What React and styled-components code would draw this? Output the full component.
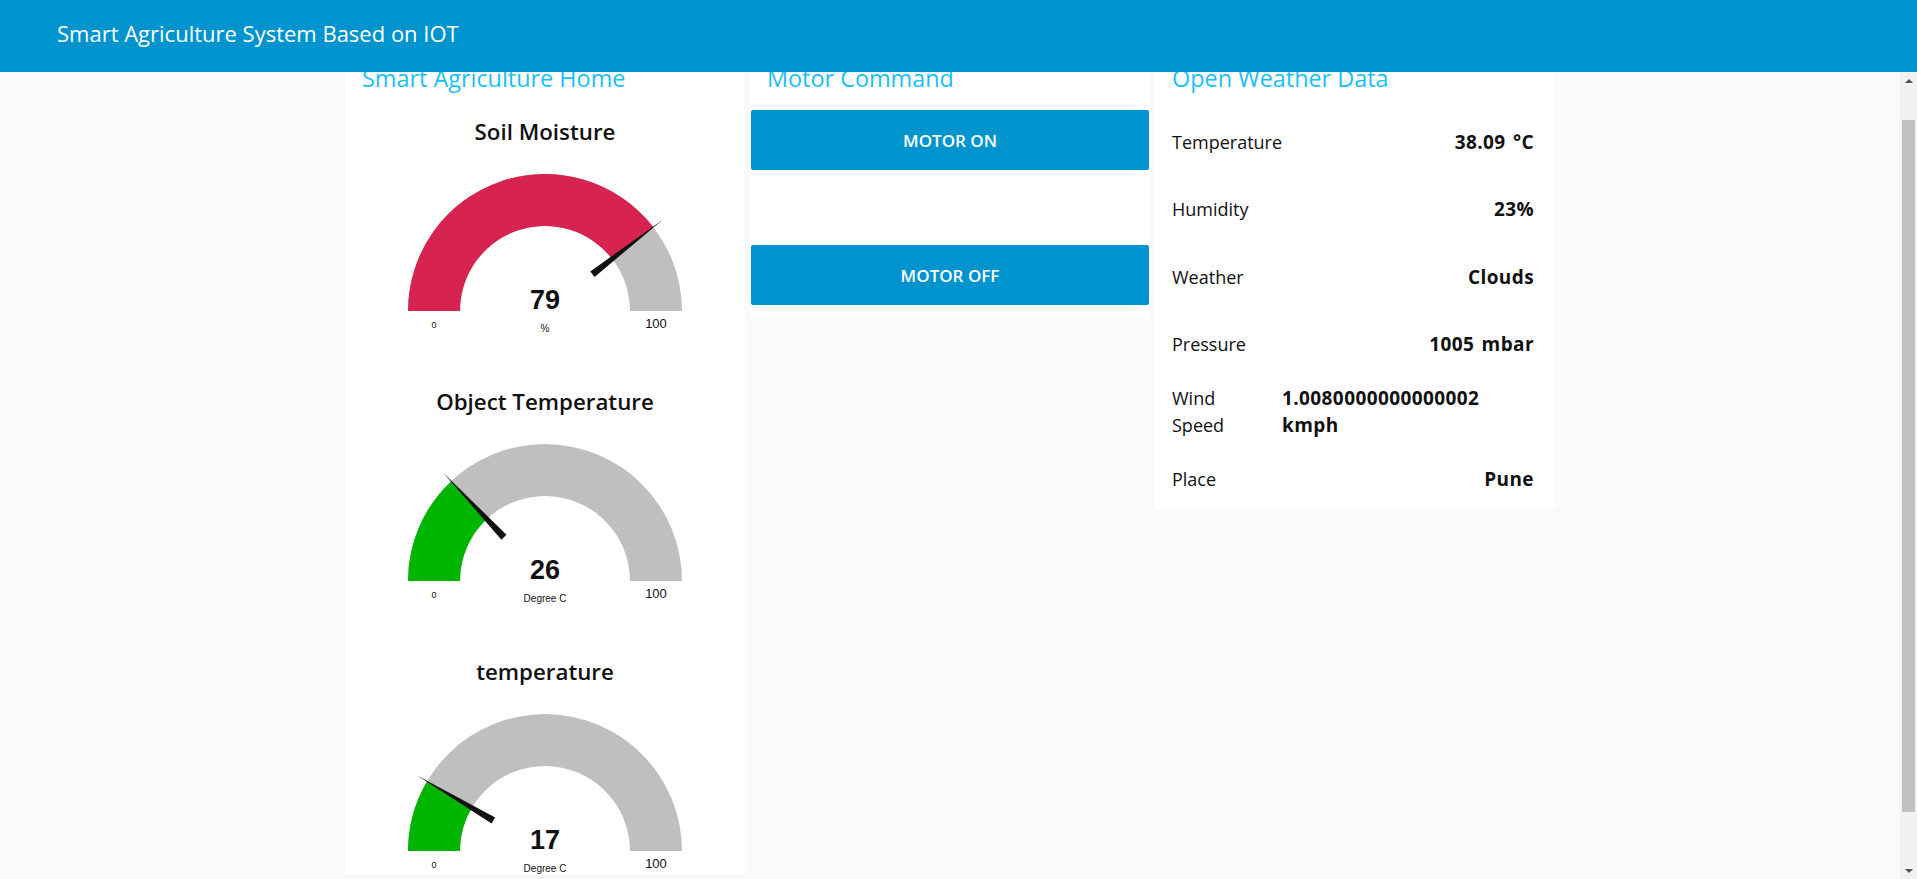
import React, { useLayoutEffect, useRef } from "react";
import styled, { createGlobalStyle, css } from "styled-components";

const GlobalStyle = createGlobalStyle`
  html, body { margin: 0; padding: 0; height: 100%; overflow: hidden; }
  body {
    font-family: "Open Sans", "Noto Sans", sans-serif;
    background: #fafafa;
    color: #111;
  }
  #root { height: 100%; }
  *, *::before, *::after { box-sizing: border-box; }
`;

const Shell = styled.div`
  height: 100vh;
  display: flex;
  flex-direction: column;
`;

const Toolbar = styled.header`
  flex: 0 0 72px;
  background: #0094ce;
  display: flex;
  align-items: center;
  padding: 0 0 6px 57px;
`;

const ToolbarTitle = styled.h1`
  margin: 0;
  font-size: 22px;
  line-height: 30px;
  font-weight: 400;
  color: #fff;
`;

const Body = styled.div`
  flex: 1;
  min-height: 0;
  display: flex;
`;

const Viewport = styled.main`
  flex: 1;
  min-width: 0;
  overflow: hidden;
  background: #fafafa;
`;

const Columns = styled.div`
  display: flex;
  justify-content: center;
  align-items: flex-start;
  gap: 5px;
  padding: 6px 0 64px;
`;

const Group = styled.section`
  width: 400px;
  background: #fff;
  display: flex;
  flex-direction: column;
  padding: 20px 0 ${(p) => p.$padBottom}px;
`;

const GroupTitle = styled.h2`
  margin: 0;
  padding: 0 17px;
  font-size: 23.4px;
  line-height: 32px;
  font-weight: 400;
  color: #1bbfff;
`;

/* ---------- Gauges ---------- */

const GaugeList = styled.div`
  display: flex;
  flex-direction: column;
  gap: 52px;
  margin-top: 22px;
`;

const GaugeWidget = styled.figure`
  margin: 0;
  display: flex;
  flex-direction: column;
  align-items: center;
`;

const GaugeTitle = styled.figcaption`
  font-size: 22.3px;
  line-height: 32px;
  font-weight: 600;
  color: #111;
`;

const GaugeSvg = styled.svg`
  display: block;
  width: 300px;
  height: 186px;
`;

const ValueText = styled.text`
  font-family: "Liberation Sans", Arial, sans-serif;
  font-weight: 700;
  font-size: 27px;
  fill: #111;
`;

const ScaleText = styled.text`
  font-family: "Liberation Sans", Arial, sans-serif;
  font-size: ${(p) => p.$size}px;
  fill: #111;
`;

const CX = 150;
const CY = 163;
const R_OUT = 137;
const R_IN = 85;

const pt = (rad, a) => [CX + rad * Math.cos(a), CY - rad * Math.sin(a)];

function sector(a1, a2) {
  const [x1, y1] = pt(R_OUT, a1);
  const [x2, y2] = pt(R_OUT, a2);
  const [x3, y3] = pt(R_IN, a2);
  const [x4, y4] = pt(R_IN, a1);
  return `M${x1} ${y1} A${R_OUT} ${R_OUT} 0 0 1 ${x2} ${y2} L${x3} ${y3} A${R_IN} ${R_IN} 0 0 0 ${x4} ${y4} Z`;
}

function Gauge({ title, value, unit, color }) {
  const a = Math.PI * (1 - value / 100);
  return (
    <GaugeWidget>
      <GaugeTitle>{title}</GaugeTitle>
      <GaugeSvg viewBox="0 0 300 186">
        <path d={sector(Math.PI, 0)} fill="#bfbfbf" />
        <path d={sector(Math.PI, a)} fill={color} />
        <polygon
          points={`${CX - 60},${CY - 3.5} ${CX - 60},${CY + 3.5} ${CX - 149},${CY}`}
          fill="#111"
          transform={`rotate(${value * 1.8} ${CX} ${CY})`}
        />
        <ValueText x={CX} y={CY - 2} textAnchor="middle">
          {value}
        </ValueText>
        <ScaleText $size={9} x={CX - 111} y={CY + 16.5} textAnchor="middle">
          0
        </ScaleText>
        <ScaleText $size={13} x={CX + 111} y={CY + 16.5} textAnchor="middle">
          100
        </ScaleText>
        <ScaleText $size={10} x={CX} y={CY + 21} textAnchor="middle">
          {unit}
        </ScaleText>
      </GaugeSvg>
    </GaugeWidget>
  );
}

/* ---------- Motor buttons ---------- */

const ButtonStack = styled.div`
  display: flex;
  flex-direction: column;
  gap: 75px;
  margin-top: 16px;
  padding: 0 1px;
`;

const CommandButton = styled.button`
  height: 60px;
  border: none;
  border-radius: 2px;
  background: #0094ce;
  color: #fff;
  font-family: "Open Sans", "Noto Sans", sans-serif;
  font-size: 17px;
  font-weight: 600;
  cursor: pointer;
`;

/* ---------- Weather rows ---------- */

const DataList = styled.div`
  display: flex;
  flex-direction: column;
  gap: 13.5px;
  margin-top: 21px;
  padding: 0 21px 0 17px;
`;

const DataRow = styled.div`
  min-height: 54px;
  display: flex;
  align-items: center;
  justify-content: space-between;
  font-size: 18px;
  line-height: 27px;
  color: #111;
`;

const DataLabel = styled.span`
  ${(p) =>
    p.$stacked &&
    css`
      flex: 0 0 80px;
      margin-right: 30px;
    `}
`;

const DataValue = styled.span`
  font-size: 19px;
  font-weight: 700;
  letter-spacing: 0.4px;
  word-spacing: 2px;
  text-align: right;
  ${(p) =>
    p.$stacked &&
    css`
      flex: 0 1 215px;
      text-align: left;
      margin-right: auto;
    `}
`;

/* ---------- Scrollbar ---------- */

const ScrollTrack = styled.div`
  flex: 0 0 17px;
  background: #f1f1f1;
  display: flex;
  flex-direction: column;
`;

const ScrollArrow = styled.div`
  flex: 0 0 17px;
  display: flex;
  align-items: center;
  justify-content: center;
`;

const ArrowGlyph = styled.span`
  width: 0;
  height: 0;
  border-left: 4px solid transparent;
  border-right: 4px solid transparent;
  ${(p) =>
    p.$down
      ? css`border-top: 4px solid #505050;`
      : css`border-bottom: 4px solid #505050;`}
`;

const ThumbLane = styled.div`
  flex: 1;
  display: flex;
  padding: 31px 2px 50px;
`;

const Thumb = styled.div`
  flex: 1;
  background: #c1c1c1;
`;

const gauges = [
  { title: "Soil Moisture", value: 79, unit: "%", color: "#d6234f" },
  { title: "Object Temperature", value: 26, unit: "Degree C", color: "#00b500" },
  { title: "temperature", value: 17, unit: "Degree C", color: "#00b500" },
];

const weather = [
  { label: "Temperature", value: "38.09 °C" },
  { label: "Humidity", value: "23%" },
  { label: "Weather", value: "Clouds" },
  { label: "Pressure", value: "1005 mbar" },
  { label: "Wind Speed", value: "1.0080000000000002 kmph", stacked: true },
  { label: "Place", value: "Pune" },
];

export default function App() {
  const viewRef = useRef(null);
  useLayoutEffect(() => {
    if (viewRef.current) viewRef.current.scrollTop = 36;
  }, []);

  return (
    <>
      <GlobalStyle />
      <Shell>
        <Toolbar>
          <ToolbarTitle>Smart Agriculture System Based on IOT</ToolbarTitle>
        </Toolbar>
        <Body>
          <Viewport ref={viewRef}>
            <Columns>
              <Group $padBottom={0}>
                <GroupTitle>Smart Agriculture Home</GroupTitle>
                <GaugeList>
                  {gauges.map((g) => (
                    <Gauge key={g.title} {...g} />
                  ))}
                </GaugeList>
              </Group>
              <Group $padBottom={13}>
                <GroupTitle>Motor Command</GroupTitle>
                <ButtonStack>
                  <CommandButton>MOTOR ON</CommandButton>
                  <CommandButton>MOTOR OFF</CommandButton>
                </ButtonStack>
              </Group>
              <Group $padBottom={2}>
                <GroupTitle>Open Weather Data</GroupTitle>
                <DataList>
                  {weather.map((w) => (
                    <DataRow key={w.label}>
                      <DataLabel $stacked={w.stacked}>{w.label}</DataLabel>
                      <DataValue $stacked={w.stacked}>{w.value}</DataValue>
                    </DataRow>
                  ))}
                </DataList>
              </Group>
            </Columns>
          </Viewport>
          <ScrollTrack>
            <ScrollArrow>
              <ArrowGlyph />
            </ScrollArrow>
            <ThumbLane>
              <Thumb />
            </ThumbLane>
            <ScrollArrow>
              <ArrowGlyph $down />
            </ScrollArrow>
          </ScrollTrack>
        </Body>
      </Shell>
    </>
  );
}
